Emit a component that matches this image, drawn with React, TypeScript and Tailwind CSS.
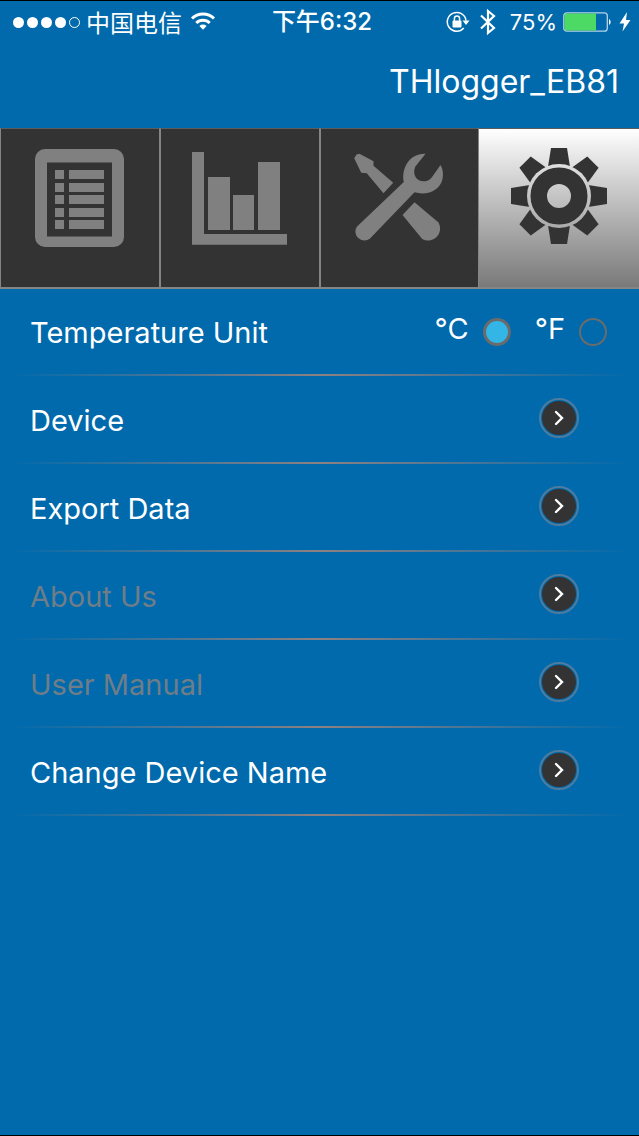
import React, { useState } from 'react';

type TabId = 'list' | 'chart' | 'tools' | 'settings';
type Unit = 'C' | 'F';

const ListIcon = () => (
    <svg viewBox="0 0 104 104" className="h-[104px] w-[104px]" fill="currentColor" aria-hidden="true">
        <path fillRule="evenodd" d="M17 3h69a10 10 0 0 1 10 10v78a10 10 0 0 1-10 10H17A10 10 0 0 1 7 91V13A10 10 0 0 1 17 3ZM19 16.500V90.500H84V16.500Z" />
        {[24, 37, 49, 62, 74].map((y) => (
            <g key={y}>
                <rect x="27" y={y} width="9" height="9" />
                <rect x="41" y={y} width="35" height="9" />
            </g>
        ))}
    </svg>
);

const ChartIcon = () => (
    <svg viewBox="0 0 104 104" className="h-[104px] w-[104px]" fill="currentColor" aria-hidden="true">
        <path d="M4 6h12v82h83v10.700H4Z" />
        <rect x="20" y="31" width="22" height="53" />
        <rect x="45" y="49" width="21" height="35" />
        <rect x="70" y="16" width="22" height="68" />
    </svg>
);

const ToolsIcon = () => (
    <svg viewBox="0 0 104 104" className="h-[104px] w-[104px]" fill="currentColor" aria-hidden="true">
        <path d="M7.200 12.300 9.500 8.500 12.500 7.700 26.500 15.300V19.700L46.200 36.700 36.500 47.300 19.800 27.300 14.200 26.700Z" />
        <path d="M9.800 80.700 56.800 36C54 22 63 7 78.500 7.700L68.200 20.700C65 29 70 35.300 76.500 35.300 81 35.300 84 33 85.800 30L93.500 19C96 23 96.500 28 95.500 33 93 44 81 50 67.500 46.300L22.800 92.700A9 9 0 0 1 9.800 80.700Z" />
        <path d="M55.500 69 67.500 56.300 91.500 76.500A12 12 0 0 1 75.200 93Z" />
    </svg>
);

const GearIcon = () => (
    <svg viewBox="0 0 104 104" className="h-[104px] w-[104px]" fill="currentColor" aria-hidden="true">
        <mask id="gear-gap">
            <rect width="104" height="104" fill="#fff" />
            <circle cx="52" cy="50" r="32" fill="#000" />
        </mask>
        <g mask="url(#gear-gap)">
            {[0, 45, 90, 135, 180, 225, 270, 315].map((deg) => (
                <path key={deg} d="M44 2h16l3.500 22h-23Z" transform={`rotate(${deg} 52 50)`} />
            ))}
        </g>
        <circle cx="52" cy="50" r="20.250" fill="none" stroke="currentColor" strokeWidth="16.500" />
    </svg>
);

const WifiIcon = () => (
    <svg viewBox="0 0 26 20" className="h-5 w-[26px]" fill="none" stroke="currentColor" strokeWidth="3" aria-hidden="true">
        <path d="M2 6.500a15.500 15.500 0 0 1 22 0" />
        <path d="M6.300 11a9.500 9.500 0 0 1 13.400 0" />
        <path d="M9.400 14a5.100 5.100 0 0 1 7.200 0L13 17.800Z" fill="currentColor" stroke="none" />
    </svg>
);

const RotationLockIcon = () => (
    <svg viewBox="0 0 24 22" className="h-[22px] w-6" fill="none" stroke="currentColor" strokeWidth="1.500" aria-hidden="true">
        <path d="M17.800 17A9.400 9.400 0 1 1 20 9.500" />
        <path d="M16.500 9.500h7L20 14Z" fill="currentColor" stroke="none" />
        <rect x="6.500" y="9.500" width="9" height="7" rx="1" fill="currentColor" stroke="none" />
        <path d="M8.400 10V7.500a2.600 2.600 0 0 1 5.200 0V10" />
    </svg>
);

const BluetoothIcon = () => (
    <svg viewBox="0 0 16 28" className="h-7 w-4" fill="none" stroke="currentColor" strokeWidth="2.200" aria-hidden="true">
        <path d="M1 7.500 14 20 8 25V3L14 8 1 20.500" />
    </svg>
);

const BatteryIcon = () => (
    <svg viewBox="0 0 50 20" className="h-5 w-[50px]" aria-hidden="true">
        <rect x="0.800" y="0.800" width="43.500" height="18.400" rx="3" fill="none" stroke="#b5d2e6" strokeWidth="1.300" />
        <path d="M3.500 1.500H33V18.500H3.500A2 2 0 0 1 1.500 16.500V3.500A2 2 0 0 1 3.500 1.500Z" fill="#4cd964" />
        <path d="M46 7a3.500 3.500 0 0 1 0 6Z" fill="#fff" />
    </svg>
);

const BoltIcon = () => (
    <svg viewBox="0 0 12 20" className="h-5 w-3" fill="currentColor" aria-hidden="true">
        <path d="M8 0 0.500 11.500H5L3.500 19.500 11.500 8H7Z" />
    </svg>
);

const tabs: { id: TabId; label: string; icon: React.ReactNode }[] = [
    { id: 'list', label: 'Records', icon: <ListIcon /> },
    { id: 'chart', label: 'Chart', icon: <ChartIcon /> },
    { id: 'tools', label: 'Tools', icon: <ToolsIcon /> },
    { id: 'settings', label: 'Settings', icon: <GearIcon /> },
];

const rows = [
    { label: 'Device', dim: false },
    { label: 'Export Data', dim: false },
    { label: 'About Us', dim: true },
    { label: 'User Manual', dim: true },
    { label: 'Change Device Name', dim: false },
];

const Divider = () => (
    <div className="mx-2 h-0.5 bg-linear-to-r from-transparent via-[#8d8082] to-transparent" />
);

const StatusBar = () => (
    <div className="grid h-[42px] grid-cols-[1fr_auto_1fr] items-center pl-[13px] pr-2 text-white">
        <div className="flex items-center">
            <div className="flex gap-[3px]">
                {[1, 2, 3, 4].map((n) => (
                    <span key={n} className="h-[11px] w-[11px] rounded-full bg-white" />
                ))}
                <span className="h-[11px] w-[11px] rounded-full border border-white" />
            </div>
            <span className="ml-1.5 font-['Noto_Sans_CJK_SC',sans-serif] text-2xl leading-6">中国电信</span>
            <span className="ml-2"><WifiIcon /></span>
        </div>
        <span className="font-[Inter,'Noto_Sans_CJK_SC',sans-serif] text-2xl font-medium leading-6">下午6:32</span>
        <div className="flex items-center justify-end">
            <RotationLockIcon />
            <span className="ml-2.5"><BluetoothIcon /></span>
            <span className="ml-3.5 text-[22px] leading-6">75%</span>
            <span className="ml-1.5"><BatteryIcon /></span>
            <span className="ml-1.5"><BoltIcon /></span>
        </div>
    </div>
);

const App: React.FC = () => {
    const [active, setActive] = useState<TabId>('settings');
    const [unit, setUnit] = useState<Unit>('C');

    return (
        <div className="min-h-screen border-y border-black bg-[#006aac] font-[Inter,sans-serif] text-white">
            <StatusBar />
            <header className="flex h-[85px] justify-end pr-5 pt-4">
                <h1 className="text-[32px] leading-[46px]">THlogger_EB81</h1>
            </header>

            <nav className="grid grid-cols-4">
                {tabs.map((tab) => (
                    <button
                        key={tab.id}
                        type="button"
                        aria-label={tab.label}
                        onClick={() => setActive(tab.id)}
                        className={`flex h-[161px] justify-center border-b-2 border-t border-t-[#5c5c5c] border-b-[#858585] pt-[17px] ${active === tab.id
                            ? 'bg-linear-to-b from-white to-[#7a7a7a] text-[#333333]'
                            : 'border-x border-x-[#858585] bg-[#333333] text-[#808080]'}`}
                    >
                        {tab.icon}
                    </button>
                ))}
            </nav>

            <main className="text-[29px] leading-9">
                <fieldset className="flex h-[85px] items-center justify-between pl-[30px] pr-8">
                    <span className="pt-0.5">Temperature Unit</span>
                    <div className="flex items-center gap-6">
                        {(['C', 'F'] as Unit[]).map((u) => (
                            <label key={u} className="flex items-center gap-3.5">
                                <span className="pb-1.5 leading-8">°{u}</span>
                                <input
                                    type="radio"
                                    name="unit"
                                    checked={unit === u}
                                    onChange={() => setUnit(u)}
                                    className="h-7 w-7 appearance-none rounded-full border-2 border-[#6b6b6b] checked:border-3 checked:bg-[#33b5e5]"
                                />
                            </label>
                        ))}
                    </div>
                </fieldset>
                <Divider />

                {rows.map((row) => (
                    <div key={row.label}>
                        <button type="button" className="flex h-[86px] w-full items-center justify-between pl-[30px] pr-[60px] text-left">
                            <span className={row.dim ? 'pt-1 text-[#6f7d88]' : 'pt-1'}>{row.label}</span>
                            <span className="mb-0.5 flex h-10 w-10 items-center justify-center rounded-full border-2 border-[#4c7ca0] p-px">
                                <span className="flex h-full w-full items-center justify-center rounded-full bg-[#333333]">
                                    <svg viewBox="0 0 16 16" className="h-4 w-4" fill="none" stroke="currentColor" strokeWidth="2.400" strokeLinecap="round" aria-hidden="true">
                                        <path d="M5 2l6 6-6 6" />
                                    </svg>
                                </span>
                            </span>
                        </button>
                        <Divider />
                    </div>
                ))}
            </main>
        </div>
    );
};

export default App;
